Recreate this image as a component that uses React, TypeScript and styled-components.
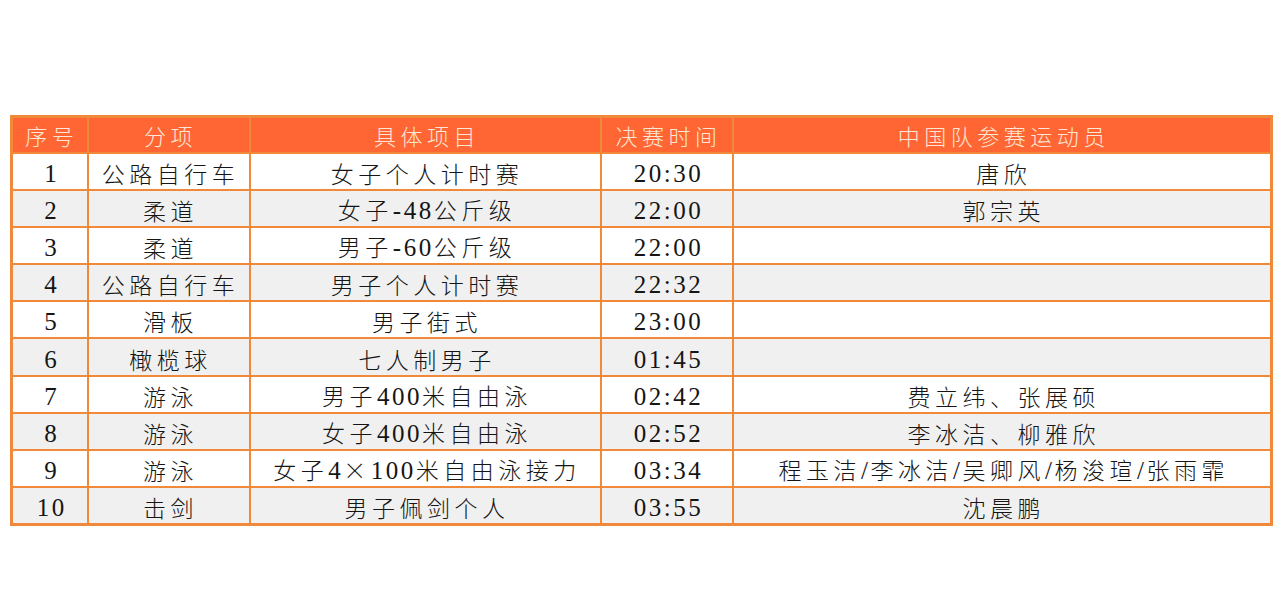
import React from "react";
import styled, { createGlobalStyle } from "styled-components";

const GlobalStyle = createGlobalStyle`
  html, body { margin: 0; padding: 0; background: #ffffff; }
  body { width: 1280px; height: 610px; overflow: hidden; }
`;

const Page = styled.div`
  padding: 115px 10px 0 10px;
  box-sizing: border-box;
  width: 1280px;
`;

const Table = styled.table`
  width: 1260px;
  border-collapse: collapse;
  table-layout: fixed;
  border: 3px solid #f08a3a;
  font-family: "Noto Sans CJK SC", sans-serif;
  font-weight: 300;
`;

const HeadRow = styled.tr`
  height: 36px;
  background: #ff6633;
`;

const HeadCell = styled.th`
  color: #fde6d6;
  font-size: 22px;
  font-weight: 300;
  padding: 0 0 0 4px;
  border: 2px solid #f08a3a;
  text-align: center;
  vertical-align: middle;
  letter-spacing: 4.5px;
  line-height: 30px;
`;

const Row = styled.tr<{ $shade: boolean }>`
  height: 37.2px;
  background: ${(p) => (p.$shade ? "#f0f0f0" : "#ffffff")};
`;

const Cell = styled.td`
  color: #151515;
  font-size: 23px;
  padding: 3px 0 0 4px;
  border: 2px solid #f08a3a;
  text-align: center;
  vertical-align: middle;
  letter-spacing: 4.5px;
  line-height: 30px;
  white-space: nowrap;
  overflow: hidden;
`;

const Latin = styled.span`
  font-family: "Liberation Serif", "Times New Roman", serif;
  font-weight: 400;
  font-size: 25px;
  letter-spacing: 2.5px;
`;

function Mixed({ text }: { text: string }) {
  const parts = text.split(/([\x00-\x7F]+)/).filter((s) => s.length > 0);
  return (
    <>
      {parts.map((p, i) =>
        /^[\x00-\x7F]+$/.test(p) ? <Latin key={i}>{p}</Latin> : <React.Fragment key={i}>{p}</React.Fragment>
      )}
    </>
  );
}

const cols = [76, 162, 351, 132, 539];
const heads = ["序号", "分项", "具体项目", "决赛时间", "中国队参赛运动员"];

type Item = { n: string; cat: string; ev: string; t: string; who: string };

const rows: Item[] = [
  { n: "1", cat: "公路自行车", ev: "女子个人计时赛", t: "20:30", who: "唐欣" },
  { n: "2", cat: "柔道", ev: "女子-48公斤级", t: "22:00", who: "郭宗英" },
  { n: "3", cat: "柔道", ev: "男子-60公斤级", t: "22:00", who: "" },
  { n: "4", cat: "公路自行车", ev: "男子个人计时赛", t: "22:32", who: "" },
  { n: "5", cat: "滑板", ev: "男子街式", t: "23:00", who: "" },
  { n: "6", cat: "橄榄球", ev: "七人制男子", t: "01:45", who: "" },
  { n: "7", cat: "游泳", ev: "男子400米自由泳", t: "02:42", who: "费立纬、张展硕" },
  { n: "8", cat: "游泳", ev: "女子400米自由泳", t: "02:52", who: "李冰洁、柳雅欣" },
  { n: "9", cat: "游泳", ev: "女子4×100米自由泳接力", t: "03:34", who: "程玉洁/李冰洁/吴卿风/杨浚瑄/张雨霏" },
  { n: "10", cat: "击剑", ev: "男子佩剑个人", t: "03:55", who: "沈晨鹏" },
];

export default function App() {
  return (
    <Page>
      <GlobalStyle />
      <Table>
        <colgroup>
          {cols.map((w, i) => (
            <col key={i} style={{ width: w }} />
          ))}
        </colgroup>
        <thead>
          <HeadRow>
            {heads.map((h) => (
              <HeadCell key={h}>{h}</HeadCell>
            ))}
          </HeadRow>
        </thead>
        <tbody>
          {rows.map((r, i) => (
            <Row key={r.n} $shade={i % 2 === 1}>
              <Cell><Mixed text={r.n} /></Cell>
              <Cell><Mixed text={r.cat} /></Cell>
              <Cell><Mixed text={r.ev} /></Cell>
              <Cell><Mixed text={r.t} /></Cell>
              <Cell><Mixed text={r.who} /></Cell>
            </Row>
          ))}
        </tbody>
      </Table>
    </Page>
  );
}
